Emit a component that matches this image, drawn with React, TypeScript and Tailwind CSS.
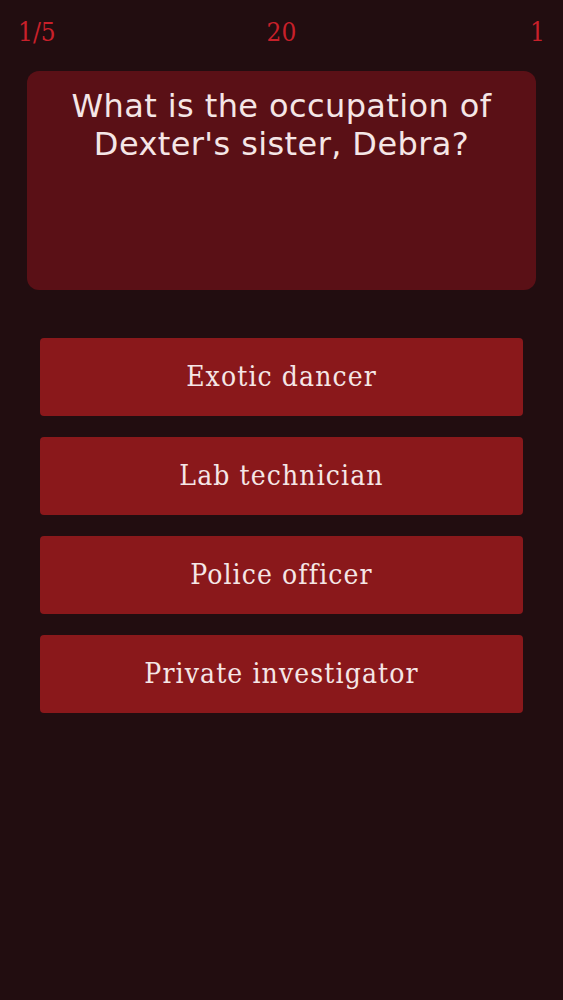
const answers = ["Exotic dancer", "Lab technician", "Police officer", "Private investigator"];

export default function App() {
  return (
    <div className="min-h-[1000px] w-full bg-[#220d10] px-[18px] font-['DejaVu_Serif_Condensed','DejaVu_Serif',serif]">
      <div className="grid h-[64px] grid-cols-3 items-center text-[26px] text-[#c8202a]">
        <span className="text-left">1/5</span>
        <span className="text-center">20</span>
        <span className="text-right">1</span>
      </div>
      <div className="mx-[9px] mt-[7px] h-[219px] rounded-[12px] bg-[#5a1016] px-4 pt-[16px] text-center font-['DejaVu_Sans',sans-serif] text-[32px] leading-[38px] tracking-[0.4px] text-[#f5e6e6]">
        What is the occupation of Dexter's sister, Debra?
      </div>
      <div className="mx-[22px] mt-[48px] flex flex-col gap-[21px]">
        {answers.map((a) => (
          <button
            key={a}
            className="flex h-[78px] items-center justify-center rounded-[4px] bg-[#8a181b] text-[28px] tracking-[1.1px] text-[#f5e6e6]"
          >
            {a}
          </button>
        ))}
      </div>
    </div>
  );
}
